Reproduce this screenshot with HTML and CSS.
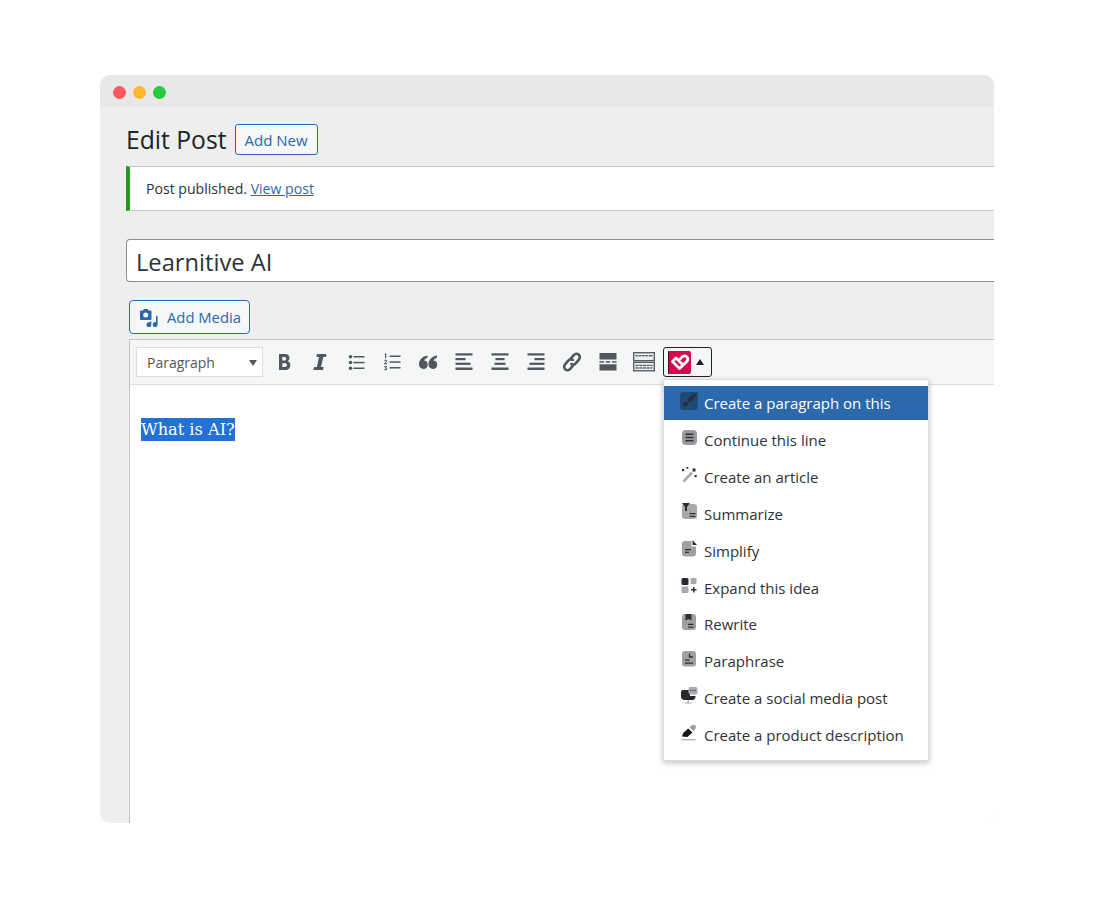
FILE: index.html
```html
<!DOCTYPE html>
<html>
    <head>
        <title>Edit Post</title>
        <link rel="stylesheet" href="styles.css">
    </head>
    <body>
    <div class="window">
        <div class="title-bar">
            <span class="dot dot-red"></span>
            <span class="dot dot-yellow"></span>
            <span class="dot dot-green"></span>
        </div>
        <div class="content">
            <div class="heading-row">
                <h1>Edit Post</h1>
                <a class="button-outline" href="#">Add New</a>
            </div>
            <div class="notice">Post published. <a href="#">View post</a></div>
            <div class="title-input">Learnitive AI</div>
            <a class="button-media" href="#">
                <svg class="media-icon" viewBox="0 0 20 20" width="20" height="20">
                    <path fill="#2c68ac" fill-rule="evenodd" d="M2 3.500h1.800L5 2h3.500l1.200 1.500H11.500a1 1 0 0 1 1 1V12a1 1 0 0 1-1 1H2a1 1 0 0 1-1-1V4.500a1 1 0 0 1 1-1zM6.700 5.500a2.500 2.500 0 1 0 0 5 2.500 2.500 0 0 0 0-5z"/>
                    <path fill="#2c68ac" d="M17 9h1.600v8.500a2.400 2.400 0 1 1-1.600-2.200zM10.700 14.500h1.600v3.200a2.400 2.400 0 1 1-1.600-2.200z"/>
                </svg>
                Add Media
            </a>
            <div class="editor">
                <div class="toolbar">
                    <div class="format-select">Paragraph<span class="select-arrow"></span></div>
                    <svg class="tool-icon" viewBox="0 0 20 20"><path fill="#50575e" fill-rule="evenodd" d="M5 2h6c2.800 0 4.500 1.500 4.500 3.900 0 1.500-.8 2.700-2 3.300 1.800.5 2.800 1.900 2.800 3.800 0 3-2 5-5 5H5zm3.300 3v3.500h2c1.200 0 1.900-.7 1.900-1.800S11.500 5 10.300 5zm0 6.300V15h2.500c1.300 0 2.200-.7 2.200-1.900s-.9-1.800-2.200-1.800z"/></svg>
                    <svg class="tool-icon" viewBox="0 0 20 20"><path fill="#50575e" d="M7 2h9.500l-.6 3h-2.700L11 15h2.600l-.6 3H3.500l.6-3h2.800L9 5H6.400z"/></svg>
                    <svg class="tool-icon" viewBox="0 0 20 20"><g fill="#50575e"><circle cx="4.500" cy="4.800" r="1.800"/><circle cx="4.500" cy="10.500" r="1.800"/><circle cx="4.500" cy="16.200" r="1.800"/><rect x="7.500" y="4" width="11" height="1.500"/><rect x="7.500" y="9.800" width="11" height="1.500"/><rect x="7.500" y="15.500" width="11" height="1.500"/></g></svg>
                    <svg class="tool-icon" viewBox="0 0 20 20"><g fill="#50575e"><rect x="7.500" y="3.500" width="11" height="1.500"/><rect x="7.500" y="9.300" width="11" height="1.500"/><rect x="7.500" y="15" width="11" height="1.500"/><path d="M3 1.500h1.300v4.800H3.100V2.800l-.8.300zM2.200 8.300c.7-.8 2.800-.6 2.800.8 0 1-1 1.500-1.600 2.100H5v1H2.100v-.9c.8-.8 1.800-1.400 1.800-2 0-.6-1-.6-1.500-.2zM2.200 14h2.800v.8l-1 1c.7.100 1.100.6 1.100 1.200 0 1.400-2.200 1.600-3 .8l.3-.8c.6.400 1.600.5 1.600-.1 0-.4-.5-.6-1.200-.5v-.8l1-.9H2.200z"/></g></svg>
                    <svg class="tool-icon" viewBox="0 0 20 20"><path fill="#50575e" d="M9.500 3.500v2.300C7.500 6.500 6.500 7.500 6.200 8.800c2-.3 3.500 1.200 3.500 3.900 0 2.500-1.700 4.300-4.200 4.300C2.700 17 1 15 1 12.300 1 7.500 4.500 4.500 9.500 3.500zM19 3.500v2.300c-2 .7-3 1.700-3.300 3 2-.3 3.500 1.200 3.500 3.900 0 2.500-1.700 4.300-4.200 4.300-2.800 0-4.500-2-4.500-4.700 0-4.800 3.500-7.800 8.500-8.800z"/></svg>
                    <svg class="tool-icon" viewBox="0 0 20 20"><g fill="#50575e"><rect x="1.500" y="1.300" width="17" height="2.200"/><rect x="1.500" y="6" width="10" height="2.200"/><rect x="1.500" y="10.700" width="15" height="2.200"/><rect x="1.500" y="15.500" width="17" height="2.500"/></g></svg>
                    <svg class="tool-icon" viewBox="0 0 20 20"><g fill="#50575e"><rect x="1.500" y="1.300" width="17" height="2.200"/><rect x="5.500" y="6" width="9" height="2.200"/><rect x="4.500" y="10.700" width="11" height="2.200"/><rect x="1.500" y="15.500" width="17" height="2.500"/></g></svg>
                    <svg class="tool-icon" viewBox="0 0 20 20"><g fill="#50575e"><rect x="1.500" y="1.300" width="17" height="2.200"/><rect x="8.500" y="6" width="10" height="2.200"/><rect x="3.500" y="10.700" width="15" height="2.200"/><rect x="1.500" y="15.500" width="17" height="2.500"/></g></svg>
                    <svg class="tool-icon" viewBox="0 0 20 20"><g fill="none" stroke="#50575e" stroke-width="2.600" stroke-linecap="round"><path d="M8.800 6.800l2.700-3.400c1.500-1.800 3.600-2.100 5.100-.8s1.700 3.400.3 5l-2.900 3.500c-1.400 1.700-3.200 2-4.700.9"/><path d="M11.200 13.200l-2.700 3.400c-1.500 1.800-3.600 2.100-5.100.8s-1.700-3.400-.3-5l2.900-3.500c1.400-1.700 3.200-2 4.700-.9"/></g></svg>
                    <svg class="tool-icon" viewBox="0 0 20 20"><g fill="#50575e"><rect x="1.500" y="1" width="17" height="6.500"/><rect x="1.500" y="9.200" width="4.500" height="1.500"/><rect x="7.700" y="9.200" width="4.500" height="1.500"/><rect x="14" y="9.200" width="4.500" height="1.500"/><rect x="1.500" y="12.300" width="17" height="6.200"/></g></svg>
                    <svg class="tool-icon tool-kitchen" viewBox="0 0 22 20"><g fill="#eceeef" stroke="#50575e" stroke-width="1.300"><rect x=".7" y=".7" width="20.600" height="8"/><rect x=".7" y="10.300" width="20.600" height="8.500"/></g><g fill="#50575e"><rect x="2.500" y="3" width="17" height="1.300"/><rect x="2.500" y="12.800" width="17" height="1.300"/><rect x="2.500" y="15.300" width="17" height="1.300"/></g><g fill="#eceeef"><rect x="5" y="3" width=".8" height="1.300"/><rect x="8.300" y="3" width=".8" height="1.300"/><rect x="11.600" y="3" width=".8" height="1.300"/><rect x="14.900" y="3" width=".8" height="1.300"/><rect x="5.500" y="12.800" width=".8" height="3.800"/><rect x="9" y="12.800" width=".8" height="3.800"/><rect x="13" y="12.800" width=".8" height="3.800"/><rect x="16.500" y="12.800" width=".8" height="3.800"/></g></svg>
                    <div class="plugin-button">
                        <svg class="plugin-logo" viewBox="0 0 23 23" width="23" height="23">
                            <rect width="23" height="23" fill="#d6084f" rx="2"/>
                            <rect width="1" height="23" fill="#3a1020"/>
                            <path fill="none" stroke="#fff" stroke-width="2.800" stroke-linejoin="round" stroke-linecap="round" d="M12.500 7.500l1.500-1.500c1.800-1.700 4-1.300 5 0s1 3.200-.2 4.500l-7.300 7-7-7L8 7l6 6"/>
                        </svg>
                        <span class="plugin-arrow"></span>
                    </div>
                </div>
                <div class="editor-body">
                    <span class="selected-text">What is AI?</span>
                </div>
            </div>
        </div>
        <ul class="menu">
            <li class="menu-item menu-item-active">
                <svg class="menu-icon" viewBox="0 0 18 18"><rect y="0" width="18" height="18.500" rx="4" fill="#1f4a78"/><path fill="#243243" d="M17.500 0C13.500 1.500 8.500 5 7 8l3 2.500C12.500 9 16 5 17.500 0zM5.500 9.300C3.500 9.800 3 12 2.500 14.500c2.500.2 5.300-.5 6-3z"/></svg>
                Create a paragraph on this
            </li>
            <li class="menu-item">
                <svg class="menu-icon" viewBox="0 0 18 18"><rect x="2" y="1" width="15" height="15" rx="4" fill="#9b9b9f"/><path fill="#2f2f33" d="M5.500 4.500h8v1.500h-8zM5.500 7.800h8v1.500h-8zM5.500 11h8v1.500h-8z"/></svg>
                Continue this line
            </li>
            <li class="menu-item">
                <svg class="menu-icon" viewBox="0 0 18 18"><path fill="none" stroke="#a9a9ad" stroke-width="2.600" d="M3.500 15.500L12 6.500"/><g fill="#2f2f33"><rect x="12.500" y="2.500" width="3" height="3"/><rect x="2" y="3" width="2.200" height="2.200"/><rect x="6.500" y="1" width="1.800" height="1.800"/><rect x="14.500" y="9" width="2.200" height="2.200"/></g></svg>
                Create an article
            </li>
            <li class="menu-item">
                <svg class="menu-icon" viewBox="0 0 18 18"><rect x="2" y="1" width="15" height="15" rx="3" fill="#a9a9ad"/><path fill="#2f2f33" d="M2 0h8L7 4v4H5V4zM9.500 10h6v1.300h-6zM9.500 12.800h6v1.300h-6z"/></svg>
                Summarize
            </li>
            <li class="menu-item">
                <svg class="menu-icon" viewBox="0 0 18 18"><path fill="#a0a0a4" d="M5 1h6.500v5.500H16V14a3 3 0 0 1-3 2.500H5a3 3 0 0 1-3-2.500V4a3 3 0 0 1 3-3z"/><path fill="#2f2f33" d="M12.500 0L17 5h-4.500zM5 9h6v1.300H5zM5 11.800h4v1.300H5z"/></svg>
                Simplify
            </li>
            <li class="menu-item">
                <svg class="menu-icon" viewBox="0 0 18 18"><rect x="1.500" y="1" width="7" height="7" rx="1.500" fill="#2a2a30"/><rect x="10.500" y="1" width="6" height="6" rx="1" fill="#a9a9ad"/><rect x="1.500" y="9.500" width="7" height="6.500" rx="1" fill="#a9a9ad"/><path fill="#2f2f33" d="M13 10h1.500v2h2v1.400h-2v2H13v-2h-2V12h2z"/></svg>
                Expand this idea
            </li>
            <li class="menu-item">
                <svg class="menu-icon" viewBox="0 0 18 18"><rect x="2" y="1" width="14" height="16" rx="3" fill="#a0a0a4"/><path fill="#2f2f33" d="M5.500 1h6v6.500L8.500 6l-3 1.500zM8 10.800h5.500v1.200H8zM8 13.500h5.500v1.200H8z"/></svg>
                Rewrite
            </li>
            <li class="menu-item">
                <svg class="menu-icon" viewBox="0 0 18 18"><rect x="2" y="1" width="14" height="15.500" rx="3" fill="#a0a0a4"/><path fill="none" stroke="#2f2f33" stroke-width="1.300" d="M9.500 3.500v3.500h3.500"/><path fill="#2f2f33" d="M5 9.500h4.500v1.200H5zM5 12.500h8v1.200H5z"/></svg>
                Paraphrase
            </li>
            <li class="menu-item">
                <svg class="menu-icon" viewBox="0 0 18 18"><path fill="#26262c" d="M2.500 3h7.500v6h5.500v.5c0 2-1.500 3.500-3 3.500H4.500C2.500 13 1 11.500 1 9.500V5c0-1 .7-2 1.500-2z"/><rect x="7.500" y="13" width="1.300" height="3" fill="#a9a9ad"/><rect x="5" y="15.500" width="6.500" height="1" fill="#a9a9ad"/><rect x="8.500" y="0" width="9" height="7.500" rx="2" fill="#a9a9ad"/><path fill="#2f2f33" d="M10.500 3h1v1h-1zM12.500 3h1v1h-1zM14.500 3h1v1h-1z"/></svg>
                Create a social media post
            </li>
            <li class="menu-item">
                <svg class="menu-icon" viewBox="0 0 18 18"><path fill="#17171b" d="M2 12.500L3.200 9l5-4.500 4.200 4-5 4.500z"/><path fill="#a0a0a4" d="M9.500 3.500L11.700 1.300c1-1 2.800-.8 3.700.2.800 1 .8 2.600-.1 3.500L13.500 7.200z"/><rect x="1.500" y="15" width="14" height="1.500" fill="#bbbbbf"/></svg>
                Create a product description
            </li>
        </ul>
    </div>
    </body>
</html>
```

FILE: styles.css
```css
body {
    margin: 0;
    background-color: #fff;
    font-family: "Open Sans", "Noto Sans", sans-serif;
    color: #2c3338;
}

.window {
    position: relative;
    width: 894px;
    height: 748px;
    margin: 75px 0 0 100px;
    background-color: #eeeeee;
    border-radius: 10px;
    overflow: hidden;
}

.title-bar {
    box-sizing: border-box;
    height: 32px;
    padding: 2px 0 0 13px;
    display: flex;
    align-items: center;
    gap: 7px;
    background-color: #e8e8e8;
}

.dot {
    width: 13px;
    height: 13px;
    border-radius: 50%;
}

.dot-red {
    background-color: #ff5a5f;
}

.dot-yellow {
    background-color: #ffb82e;
}

.dot-green {
    background-color: #28c840;
}

.content {
    padding: 17px 0 0 26px;
}

.heading-row {
    display: flex;
    align-items: center;
    gap: 8px;
    height: 31px;
}

h1 {
    margin: 0;
    font-size: 24.700px;
    font-weight: 400;
    color: #1d2327;
}

.button-outline {
    box-sizing: border-box;
    height: 31px;
    padding: 0 9px;
    line-height: 31px;
    font-size: 15px;
    color: #2c68ac;
    background-color: #f6f7f7;
    border: 1px solid #2c68ac;
    border-radius: 3px;
    text-decoration: none;
    font-weight: 500;
}

.notice {
    box-sizing: border-box;
    height: 45px;
    margin-top: 11px;
    padding-left: 16px;
    line-height: 43px;
    font-size: 14.100px;
    background-color: #fff;
    border: 1px solid #c3c4c7;
    border-left: 4px solid #1f9a1f;
    border-right: none;
}

.notice a {
    color: #2c68ac;
}

.title-input {
    box-sizing: border-box;
    height: 43px;
    margin-top: 28px;
    padding-left: 9px;
    line-height: 44px;
    font-size: 23.700px;
    color: #2c3338;
    background-color: #fff;
    border: 1px solid #8c8f94;
    border-right: none;
    border-radius: 4px 0 0 4px;
}

.button-media {
    box-sizing: border-box;
    display: inline-flex;
    align-items: center;
    gap: 8px;
    width: 121px;
    height: 34px;
    margin: 18px 0 0 3px;
    padding-left: 9px;
    font-size: 14.800px;
    color: #2c68ac;
    background-color: #f6f7f7;
    border: 1px solid #2c68ac;
    border-radius: 4px;
    text-decoration: none;
    vertical-align: top;
}

.editor {
    margin: 5px 0 0 3px;
    height: 484px;
    border-left: 1px solid #c3c4c7;
}

.toolbar {
    box-sizing: border-box;
    height: 46px;
    padding: 7px 0 0 6px;
    display: flex;
    align-items: flex-start;
    background-color: #f5f6f6;
    border-top: 1px solid #c3c4c7;
    border-bottom: 1px solid #dcdcde;
}

.format-select {
    box-sizing: border-box;
    position: relative;
    width: 127px;
    height: 30px;
    padding-left: 10px;
    margin-right: 3px;
    line-height: 29px;
    font-size: 14px;
    color: #50575e;
    background-color: #fff;
    border: 1px solid #dcdcde;
}

.select-arrow {
    position: absolute;
    right: 5px;
    top: 12px;
    border-top: 6px solid #50575e;
    border-left: 4px solid transparent;
    border-right: 4px solid transparent;
}

.tool-icon {
    flex: none;
    width: 20px;
    height: 20px;
    margin: 5px 8px;
}

.tool-kitchen {
    width: 22px;
    margin-left: 7px;
    margin-right: 7px;
}

.plugin-button {
    box-sizing: border-box;
    display: flex;
    align-items: center;
    width: 49px;
    height: 30px;
    margin-left: 1px;
    padding-left: 4px;
    border: 1px solid #1d2327;
    border-radius: 3px;
}

.plugin-arrow {
    margin-left: 5px;
    border-bottom: 6px solid #1d2327;
    border-left: 4px solid transparent;
    border-right: 4px solid transparent;
}

.editor-body {
    box-sizing: border-box;
    padding: 33px 0 0 11px;
    height: 438px;
    background-color: #fff;
}

.selected-text {
    padding: 2px 0;
    font-family: "DejaVu Serif", serif;
    font-size: 16.200px;
    color: #fff;
    background-color: #2271d3;
}

.menu {
    position: absolute;
    left: 563px;
    top: 304px;
    box-sizing: border-box;
    width: 266px;
    height: 382px;
    margin: 0;
    padding: 6.100px 0 0;
    list-style: none;
    background-color: #fff;
    border: 1px solid #dcdcde;
    box-shadow: 0 2px 6px rgba(0, 0, 0, 0.25);
}

.menu-item {
    display: flex;
    align-items: center;
    gap: 6px;
    height: 34px;
    margin-bottom: 2.900px;
    padding-left: 16px;
    font-size: 15px;
    color: #2c3338;
}

.menu-item-active {
    color: #fff;
    background-color: #2c68ac;
}

.menu-icon {
    flex: none;
    width: 18px;
    height: 18px;
    margin-top: -4px;
}
```
